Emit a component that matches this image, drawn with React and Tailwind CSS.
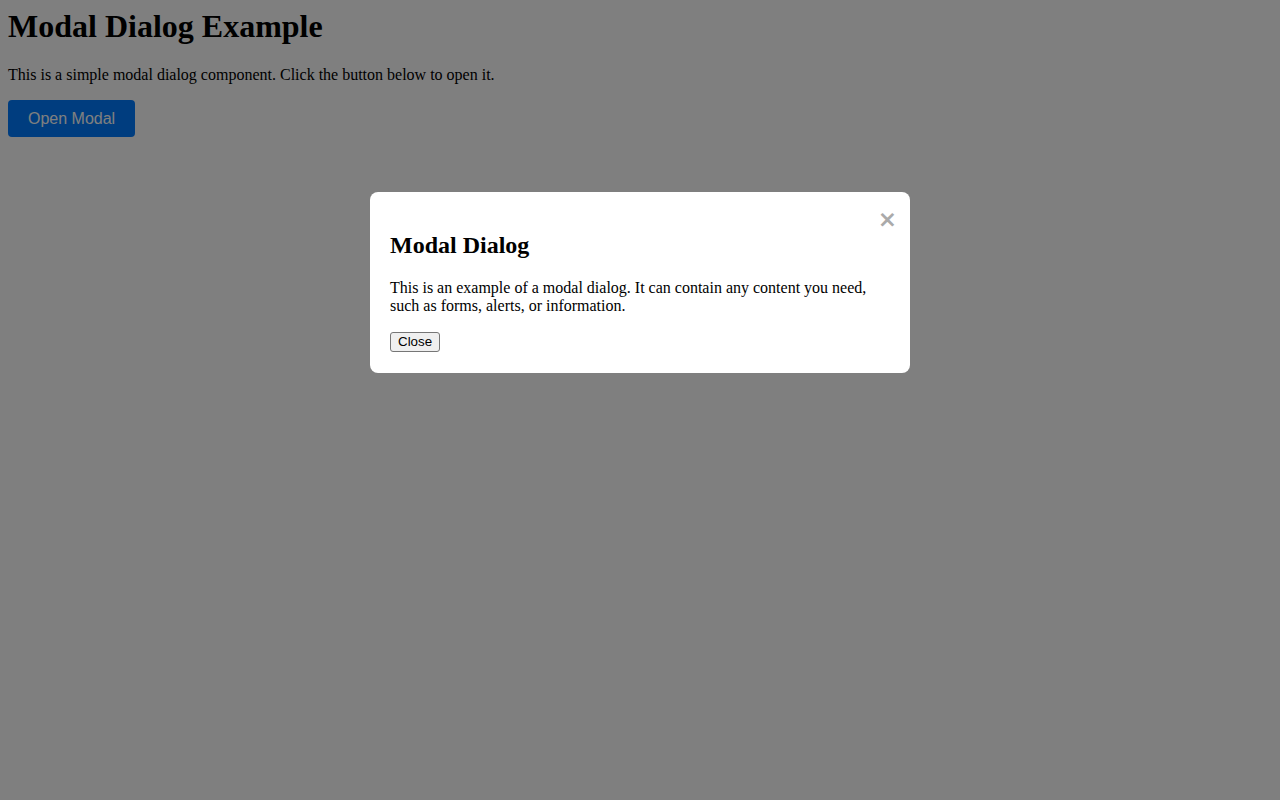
export default function App() {
  return (
    <div className="min-h-[800px] bg-white p-2 font-['Liberation_Serif',serif] text-black">
      <h1 className="mb-[21.44px] text-[32px] font-bold leading-[normal]">Modal Dialog Example</h1>
      <p className="mb-4 text-base leading-[normal]">
        This is a simple modal dialog component. Click the button below to open it.
      </p>
      <button className="rounded bg-[#007bff] px-5 py-[9.5px] font-['Liberation_Sans',sans-serif] text-base leading-[18px] text-white">
        Open Modal
      </button>

      {/* backdrop + dialog */}
      <div className="fixed inset-0 bg-black/50">
        <div className="mx-auto mt-[192px] w-[540px] rounded-lg bg-white p-5">
          <span className="float-right -mt-[6px] mr-[-7px] cursor-pointer font-['DejaVu_Sans',sans-serif] text-[23px] font-bold leading-[normal] text-[#aaa]">
            ×
          </span>
          <h2 className="my-[19.92px] text-[24px] font-bold leading-[normal]">Modal Dialog</h2>
          <p className="mb-[14px] text-base leading-[normal]">
            This is an example of a modal dialog. It can contain any content you need, such as forms,
            alerts, or information.
          </p>
          <button className="rounded-[3px] border border-[#767676] bg-[#efefef] px-[7px] py-[1px] font-['Liberation_Sans',sans-serif] text-[13.33px] leading-[16px] text-black">
            Close
          </button>
        </div>
      </div>
    </div>
  );
}
